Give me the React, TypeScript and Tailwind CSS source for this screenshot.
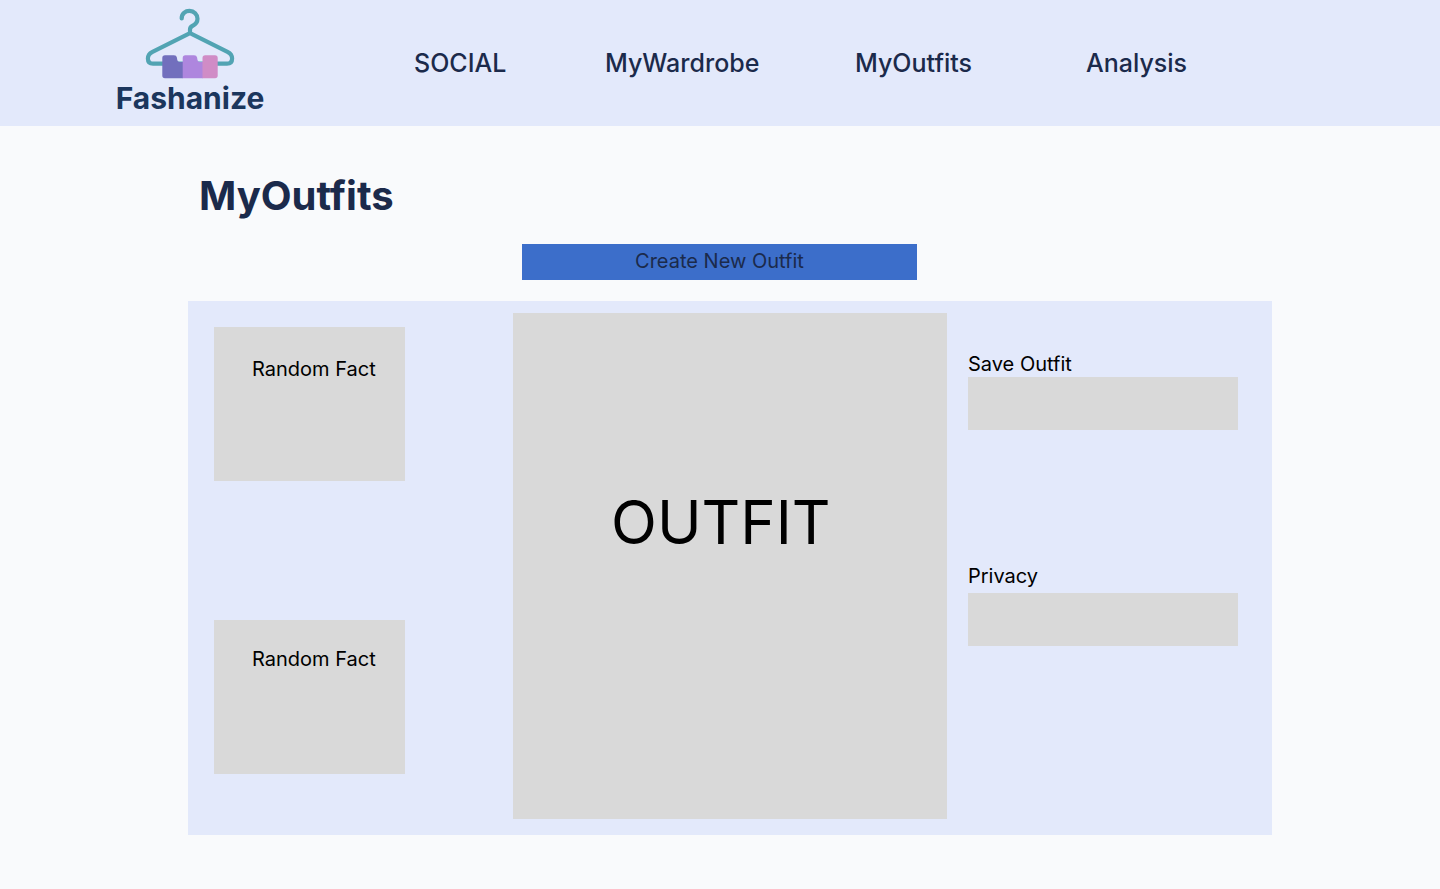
import React from "react";

const links = [
  { label: "SOCIAL", cell: "w-[92px]" },
  { label: "MyWardrobe", cell: "w-[153px] ml-[99px]" },
  { label: "MyOutfits", cell: "w-[118px] ml-[97px]" },
  { label: "Analysis", cell: "w-[100px] ml-[113px]" },
];

function Logo() {
  return (
    <a href="#" className="flex w-[150px] flex-col items-center pt-2 text-[#1b365d]">
      <svg viewBox="0 0 90 72" className="h-[72px] w-[90px]" aria-hidden="true">
        <path
          d="M36.700 10.500C36.500 5.500 40.500 2.900 44.500 2.900C49 2.900 52.500 6.300 52.500 10.800C52.500 14.500 50.300 16.600 47.300 18C45.500 18.900 45 19.800 45 21.500V25.200L7.500 43.800C4.500 45.300 2.900 47.500 2.900 50.500C2.900 53.800 4.800 55.700 8 55.700H82C85.200 55.700 87.100 53.800 87.100 50.500C87.100 47.500 85.500 45.300 82.500 43.800L45 25.200"
          fill="none"
          stroke="#52a4b3"
          strokeWidth="4.2"
          strokeLinecap="round"
          strokeLinejoin="round"
        />
        <path d="M17.300 50Q17.300 47.200 20 47.200H29Q31.500 47.200 31.900 49.500L32.300 52Q32.700 54 34.500 54H38V70.300H20Q17.300 70.300 17.300 67.500Z" fill="#726fbd" />
        <path d="M37.700 50Q37.700 47.200 40.400 47.200H49Q51.700 47.200 52.100 49.500L52.500 52Q52.900 54 54.700 54H58V70.300H37.700Z" fill="#ae86de" />
        <path d="M57.500 50Q57.500 47.200 60.200 47.200H70Q72.700 47.200 72.700 50V67.500Q72.700 70.300 70 70.300H57.500Z" fill="#d08cc6" />
      </svg>
      <span className="text-[30px] font-bold leading-9">Fashanize</span>
    </a>
  );
}

function Fact({ inset }: { inset: string }) {
  return (
    <article className={`h-[154px] w-[191px] bg-[#d9d9d9] pl-[38px] text-xl leading-6 ${inset}`}>
      Random Fact
    </article>
  );
}

export default function App() {
  return (
    <div className="min-h-screen bg-[#f9fafc] font-['Inter',sans-serif] text-black">
      <header className="flex h-[126px] bg-[#e3e9fb] pl-[115px]">
        <Logo />
        <nav className="ml-[149px] flex items-center text-[25px] font-medium leading-8 text-[#1b2a4b]">
          {links.map((l) => (
            <a key={l.label} href="#" className={`whitespace-nowrap ${l.cell}`}>
              {l.label}
            </a>
          ))}
        </nav>
      </header>
      <main className="pl-[188px] pr-[168px]">
        <h1 className="pt-[45px] pl-[11px] text-[40px] font-bold leading-[49px] text-[#1b2a4b]">MyOutfits</h1>
        <button className="mt-6 ml-[334px] block h-9 w-[395px] bg-[#3c6eca] pb-[2px] text-xl text-[#1b2a4b]">
          Create New Outfit
        </button>
        <section className="mt-[21px] flex h-[534px] bg-[#e3e9fb] pt-3 pl-[26px] pr-[34px]">
          <div className="flex flex-col gap-[139px] pt-[14px]">
            <Fact inset="pt-[30px]" />
            <Fact inset="pt-[27px]" />
          </div>
          <div className="ml-[108px] h-[506px] grow bg-[#d9d9d9] pt-[172px] pl-[98px] text-[60px] leading-[75px]">
            OUTFIT
          </div>
          <form className="ml-[21px] flex w-[270px] flex-col pt-[39px] text-xl leading-6">
            <label htmlFor="save">Save Outfit</label>
            <input id="save" className="mt-[1px] h-[53px] bg-[#d9d9d9] px-3" />
            <label htmlFor="privacy" className="mt-[134px]">Privacy</label>
            <input id="privacy" className="mt-[5px] h-[53px] bg-[#d9d9d9] px-3" />
          </form>
        </section>
      </main>
    </div>
  );
}
